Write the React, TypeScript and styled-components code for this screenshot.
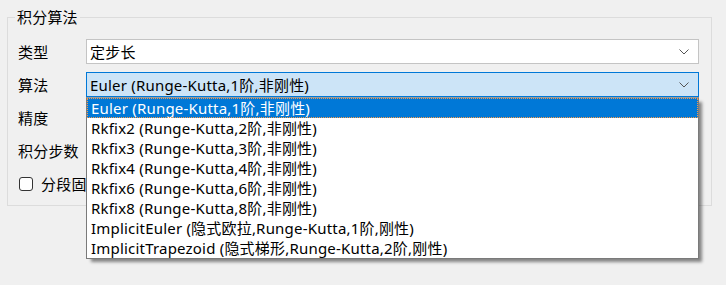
import React from "react";
import styled, { createGlobalStyle } from "styled-components";

const FONT = `"Noto Sans", "Noto Sans CJK SC", sans-serif`;

const GlobalStyle = createGlobalStyle`
  html, body { margin: 0; padding: 0; }
  body {
    background: #f0f0f0;
    font-family: ${FONT};
    font-size: 15px;
    letter-spacing: 0.2px;
    color: #000;
  }
  * { box-sizing: border-box; }
`;

const Page = styled.div`
  width: 726px;
  height: 285px;
  padding: 8px 14px 0 7px;
  overflow: hidden;
`;

const Group = styled.fieldset`
  margin: 0;
  min-width: 0;
  height: 198px;
  border: 1px solid #dcdcdc;
  padding: 13px 12px 0 10px;
  display: flex;
  flex-direction: column;
  gap: 8px;
`;

const Legend = styled.legend`
  margin-left: -3px;
  padding: 0 2px;
  font-size: 15px;
  line-height: 18px;
`;

const Row = styled.div`
  display: flex;
  align-items: center;
  height: 25px;
`;

const Label = styled.div`
  width: 68px;
  flex: none;
  line-height: 20px;
  white-space: nowrap;
`;

const ComboWrap = styled.div`
  position: relative;
  flex: 1;
  height: 25px;
`;

const Combo = styled.div<{ $active?: boolean }>`
  height: 25px;
  display: flex;
  align-items: center;
  padding: 0 9px 0 3px;
  border: 1px solid ${(p) => (p.$active ? "#0078d7" : "#c4c4c4")};
  background: ${(p) => (p.$active ? "#cce4f7" : "#fff")};
  line-height: 20px;
`;

const ComboText = styled.span`
  flex: 1;
  white-space: nowrap;
`;

const Field = styled.div`
  flex: 1;
  height: 25px;
  border: 1px solid #c4c4c4;
  background: #fff;
`;

const DropList = styled.div`
  position: absolute;
  top: 100%;
  left: 0;
  right: 0;
  z-index: 5;
  background: #fff;
  border: 1px solid #7a7a7a;
  border-top-color: #9a9a9a;
  box-shadow: 4px 4px 3px -1px rgba(0, 0, 0, 0.45);
`;

const Option = styled.div<{ $selected?: boolean }>`
  height: 20px;
  line-height: 20px;
  padding-left: 4px;
  white-space: nowrap;
  background: ${(p) => (p.$selected ? "#0078d7" : "#fff")};
  color: ${(p) => (p.$selected ? "#fff" : "#000")};
  outline: ${(p) => (p.$selected ? "1px dotted #f59a4a" : "none")};
  outline-offset: -1px;
`;

const CheckRow = styled.label`
  display: flex;
  align-items: center;
  gap: 8px;
  width: 68px;
  overflow: hidden;
  padding-left: 1px;
  line-height: 20px;
  white-space: nowrap;
`;

const CheckBox = styled.span`
  width: 14px;
  height: 14px;
  border: 1px solid #333;
  border-radius: 3px;
  background: #fff;
  flex: none;
`;

const Chevron = () => (
  <svg width="10" height="6" viewBox="0 0 10 6">
    <polyline points="0.5,0.5 5,5 9.5,0.5" fill="none" stroke="#555" strokeWidth="1" />
  </svg>
);

const options = [
  "Euler (Runge-Kutta,1阶,非刚性)",
  "Rkfix2 (Runge-Kutta,2阶,非刚性)",
  "Rkfix3 (Runge-Kutta,3阶,非刚性)",
  "Rkfix4 (Runge-Kutta,4阶,非刚性)",
  "Rkfix6 (Runge-Kutta,6阶,非刚性)",
  "Rkfix8 (Runge-Kutta,8阶,非刚性)",
  "ImplicitEuler (隐式欧拉,Runge-Kutta,1阶,刚性)",
  "ImplicitTrapezoid (隐式梯形,Runge-Kutta,2阶,刚性)",
];

export default function App() {
  return (
    <>
      <GlobalStyle />
      <Page>
        <Group>
          <Legend>积分算法</Legend>
          <Row>
            <Label>类型</Label>
            <ComboWrap>
              <Combo>
                <ComboText>定步长</ComboText>
                <Chevron />
              </Combo>
            </ComboWrap>
          </Row>
          <Row>
            <Label>算法</Label>
            <ComboWrap>
              <Combo $active>
                <ComboText>{options[0]}</ComboText>
                <Chevron />
              </Combo>
              <DropList>
                {options.map((o, i) => (
                  <Option key={o} $selected={i === 0}>
                    {o}
                  </Option>
                ))}
              </DropList>
            </ComboWrap>
          </Row>
          <Row>
            <Label>精度</Label>
            <Field />
          </Row>
          <Row>
            <Label>积分步数</Label>
            <Field />
          </Row>
          <Row>
            <CheckRow>
              <CheckBox />
              分段固定步长
            </CheckRow>
          </Row>
        </Group>
      </Page>
    </>
  );
}
